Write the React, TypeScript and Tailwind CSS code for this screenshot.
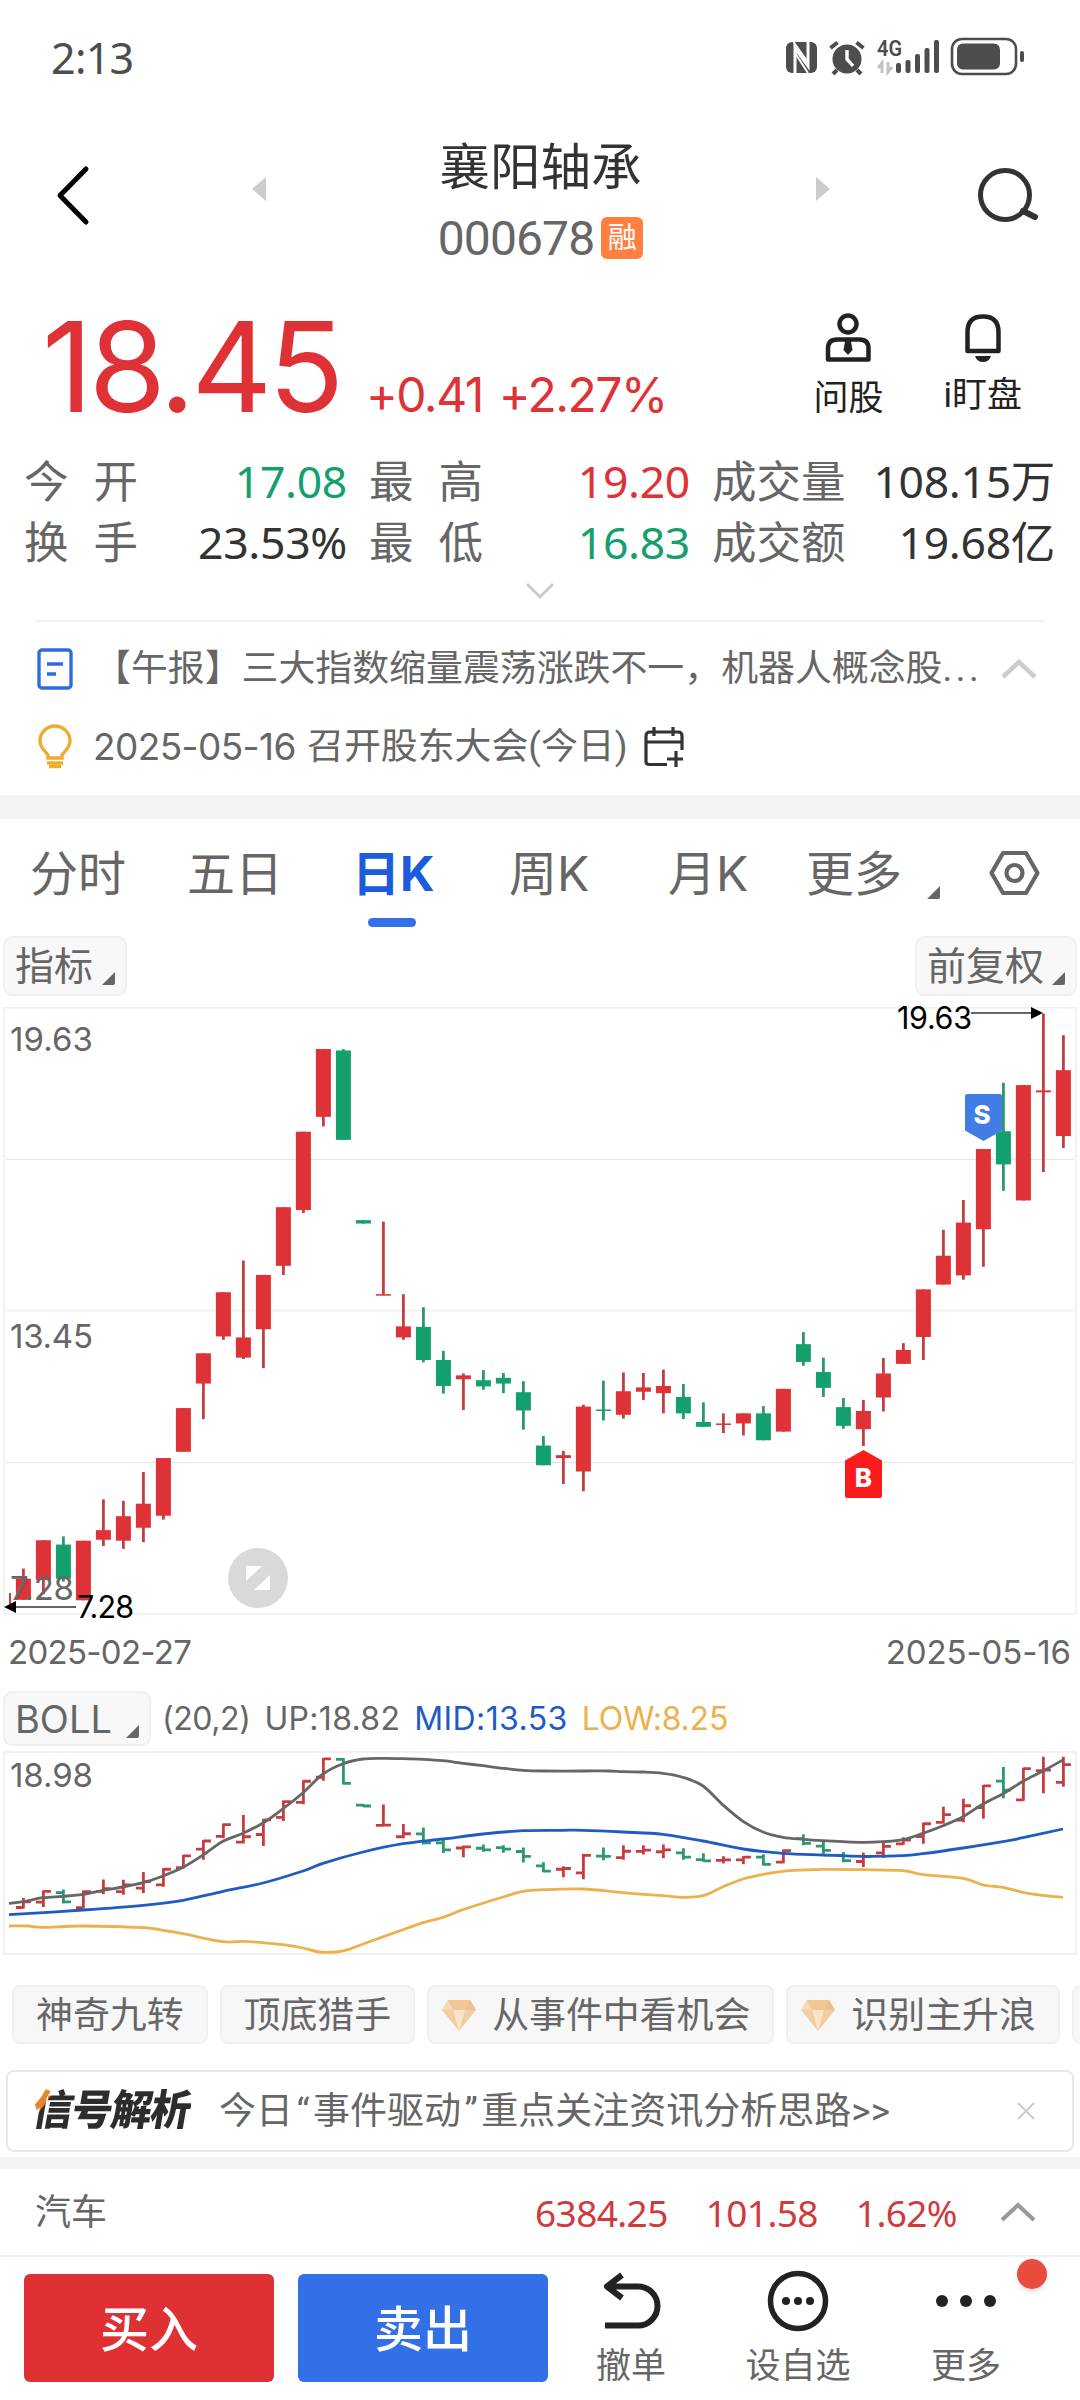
import type { ReactNode } from "react";
import { clsx } from "clsx";

type Candle = [open: number, close: number, high: number, low: number];

const RED = "#df3236";
const GREEN = "#14a06c";
const CHART_TOP = 1007;
const PITCH = 20;

const candles: Candle[] = [
    [7.43, 7.87, 8.08, 7.43],
    [7.84, 8.67, 8.67, 7.55],
    [8.58, 7.87, 8.75, 7.81],
    [7.42, 8.66, 8.66, 7.42],
    [8.68, 8.88, 9.52, 8.55],
    [8.66, 9.17, 9.49, 8.49],
    [8.93, 9.43, 10.09, 8.63],
    [9.18, 10.38, 10.38, 9.1],
    [10.51, 11.42, 11.42, 10.51],
    [11.93, 12.56, 12.56, 11.19],
    [12.91, 13.83, 13.83, 12.84],
    [12.47, 12.89, 14.49, 12.44],
    [13.06, 14.19, 14.19, 12.25],
    [14.38, 15.6, 15.6, 14.19],
    [15.54, 17.17, 17.17, 15.48],
    [17.48, 18.89, 18.89, 17.28],
    [18.86, 17.0, 18.89, 17.0],
    [15.33, 15.26, 15.33, 15.26],
    [13.77, 13.79, 15.3, 13.77],
    [12.89, 13.12, 13.79, 12.84],
    [13.11, 12.42, 13.52, 12.37],
    [12.42, 11.88, 12.61, 11.72],
    [12.02, 12.1, 12.14, 11.38],
    [12.0, 11.87, 12.21, 11.8],
    [12.05, 11.93, 12.15, 11.73],
    [11.75, 11.37, 11.98, 10.97],
    [10.64, 10.23, 10.84, 10.23],
    [10.38, 10.44, 10.53, 9.84],
    [10.1, 11.45, 11.49, 9.69],
    [11.39, 11.37, 11.99, 11.16],
    [11.28, 11.77, 12.16, 11.2],
    [11.76, 11.85, 12.15, 11.59],
    [11.73, 11.88, 12.22, 11.31],
    [11.65, 11.31, 11.92, 11.19],
    [11.13, 11.03, 11.54, 11.03],
    [11.07, 11.1, 11.31, 10.9],
    [11.1, 11.31, 11.31, 10.85],
    [11.31, 10.75, 11.46, 10.75],
    [10.93, 11.82, 11.82, 10.93],
    [12.75, 12.38, 13.0, 12.3],
    [12.17, 11.84, 12.47, 11.65],
    [11.44, 11.05, 11.63, 10.99],
    [10.98, 11.36, 11.59, 10.63],
    [11.64, 12.14, 12.46, 11.35],
    [12.34, 12.63, 12.77, 12.34],
    [12.9, 13.89, 13.89, 12.42],
    [13.99, 14.59, 15.13, 13.99],
    [14.18, 15.28, 15.75, 14.09],
    [15.14, 16.81, 16.81, 14.36],
    [17.18, 16.49, 18.19, 15.94],
    [15.74, 18.14, 18.14, 15.74],
    [17.99, 18.03, 19.63, 16.33],
    [17.08, 18.45, 19.18, 16.83],
];

const upBand = [9, 153.3, 23, 151.7, 43, 147.7, 63, 146.3, 83, 144.3, 103, 140.3, 123, 137, 143, 132.7, 163, 126, 183, 117.3, 203, 105, 223, 91.3, 243, 83.3, 263, 73, 283, 58.7, 303, 42.7, 323, 24, 343, 13.7, 363, 9, 383, 8.3, 403, 8.6, 423, 9.3, 443, 10.7, 463, 13.3, 483, 15.7, 503, 18.3, 523, 20.3, 543, 21, 583, 21, 609, 21, 623, 21.7, 643, 22, 663, 23.3, 683, 27.3, 703, 36, 723, 55, 743, 71.3, 763, 82, 783, 87.3, 803, 89.3, 823, 90.7, 843, 91.7, 863, 92.3, 883, 91.7, 903, 89.7, 923, 83.3, 943, 75.7, 963, 66.7, 983, 54, 1003, 43.7, 1023, 31.3, 1043, 21, 1063, 10];
const midBand = [9, 164.7, 83, 160, 143, 155.3, 183, 150.3, 223, 141.3, 263, 133, 303, 121, 323, 113.3, 363, 102, 403, 93.7, 443, 89, 483, 84, 523, 80.7, 563, 80.3, 583, 80.3, 623, 82, 663, 84.3, 703, 91, 743, 99, 783, 103.3, 823, 105, 863, 106.3, 903, 105.7, 923, 103.7, 963, 98, 1003, 91.7, 1023, 87.7, 1063, 79];
const lowBand = [9, 176, 28, 176, 43, 177.3, 83, 176, 143, 177.7, 163, 180.3, 183, 183.7, 223, 191.7, 243, 191.3, 263, 192.7, 283, 194.7, 303, 198, 319, 202, 336, 202, 348, 199.7, 363, 194, 403, 179.7, 423, 172.7, 443, 167.3, 463, 159.7, 503, 147, 523, 141.3, 543, 139.7, 583, 139, 623, 142.7, 663, 145.7, 683, 147.3, 703, 145.7, 723, 136.7, 743, 129, 763, 124.3, 783, 121.3, 803, 120, 823, 119.3, 863, 119.7, 903, 120.7, 923, 124.7, 963, 128.3, 983, 135, 1003, 137.3, 1023, 142.3, 1043, 145.3, 1063, 147.3];

// Catmull-Rom through a flat [x, y, x, y, ...] list
function smooth(flat: number[]) {
    const pts: [number, number][] = [];
    for (let i = 0; i < flat.length; i += 2) pts.push([flat[i], flat[i + 1]]);
    let d = `M${pts[0][0]} ${pts[0][1]}`;
    for (let i = 0; i < pts.length - 1; i++) {
        const p0 = pts[i - 1] ?? pts[i];
        const p1 = pts[i];
        const p2 = pts[i + 1];
        const p3 = pts[i + 2] ?? p2;
        d += `C${p1[0] + (p2[0] - p0[0]) / 6} ${p1[1] + (p2[1] - p0[1]) / 6} ${p2[0] - (p3[0] - p1[0]) / 6} ${p2[1] - (p3[1] - p1[1]) / 6} ${p2[0]} ${p2[1]}`;
    }
    return d;
}

const candleX = (i: number) => 23.4 + i * PITCH;
const priceY = (p: number) => 1013.5 - CHART_TOP + (19.63 - p) * 48.06;
const bollY = (p: number) => 7.8 + (18.98 - Math.min(p, 18.98)) * 12.96;

function StatusBar() {
    return (
        <div className="flex h-[110px] items-start justify-between pt-[30px] pl-[51px]">
            <span className="font-['Noto_Sans'] text-[43px] leading-[56px] tracking-[-0.700px] text-[#4d4d4d]">2:13</span>
            <svg width="260" height="56" viewBox="780 30 260 56" className="mr-[40px]" fill="#4d4d4d">
                <rect x="786" y="42" width="31" height="31" rx="6" />
                <path d="M795 74V48l13 18V41" stroke="#fff" strokeWidth="3" fill="none" />
                <path d="M793.500 42l15 21M795 53l13 20" stroke="#fff" strokeWidth="2" />
                <circle cx="847" cy="59" r="14.5" />
                <path d="M830.500 48l7-5.500M863.500 48l-7-5.500M837 70l-4 4M857 70l4 4" stroke="#4d4d4d" strokeWidth="4" />
                <path d="M847 50v9l6 7" stroke="#fff" strokeWidth="3.4" fill="none" />
                <text x="877" y="56" fontSize="22" fontWeight="600" fontFamily="Roboto" textLength="25" lengthAdjust="spacingAndGlyphs">4G</text>
                <path d="M882 73V63l-4 5M888 62v10l4-5" stroke="#c4c4c4" strokeWidth="3" fill="none" />
                <rect x="896" y="63" width="5" height="10" rx="2" />
                <rect x="905.500" y="60" width="5" height="13" rx="2" />
                <rect x="915" y="54" width="5" height="19" rx="2" />
                <rect x="924.500" y="48" width="5" height="25" rx="2" />
                <rect x="934" y="40" width="5" height="33" rx="2" />
                <rect x="952" y="39" width="64" height="35" rx="10" fill="none" stroke="#4d4d4d" strokeWidth="2.600" />
                <rect x="957" y="43.500" width="43" height="26" rx="6" />
                <rect x="1020" y="51" width="4" height="11" rx="2" />
            </svg>
        </div>
    );
}

function Header() {
    return (
        <div className="flex h-[180px] justify-between">
            <svg width="60" height="180" viewBox="40 110 60 180" className="ml-[40px]" fill="none" stroke="#000" strokeWidth="5" strokeLinecap="round" strokeLinejoin="round">
                <path d="M86 169 60 195.500 86 222" />
            </svg>
            <div className="ml-[11px] flex w-[580px] justify-between">
                <svg width="16" height="180" viewBox="0 0 16 180" fill="#ccc">
                    <path d="M1 79 15 67v24z" />
                </svg>
                <div className="flex flex-col items-center">
                    <h1 className="mt-[28px] text-[50.500px] leading-[60px] text-[#333]">襄阳轴承</h1>
                    <div className="mt-[18px] flex h-[44px] items-center gap-[7px]">
                        <span className="pt-[2px] font-['Roboto'] text-[48px] leading-[44px] tracking-[-0.900px] text-[#666]">000678</span>
                        <span className="flex h-[42px] w-[42px] items-center justify-center rounded-md bg-[#ff8040] text-[29px] leading-none text-white">融</span>
                    </div>
                </div>
                <svg width="16" height="180" viewBox="0 0 16 180" fill="#ccc">
                    <path d="M15 79 1 67v24z" />
                </svg>
            </div>
            <svg width="80" height="180" viewBox="970 110 80 180" className="mr-[30px]" fill="none" stroke="#333" strokeWidth="5">
                <circle cx="1005" cy="195" r="24.500" />
                <path d="M1023 211 1035 217" strokeWidth="6" strokeLinecap="round" />
            </svg>
        </div>
    );
}

function Quote() {
    return (
        <div className="flex h-[150px] items-start pl-[42px] text-[#df3236]">
            <span className="w-[324px] font-['Inter'] text-[125px] leading-[154px] tracking-[-4px]">18.45</span>
            <span className="mt-[75px] font-['Inter'] text-[48px] leading-[60px] tracking-[-1.500px] whitespace-nowrap">
                +0.41 <span className="ml-[4px]">+2.27%</span>
            </span>
            <div className="mt-[22px] ml-auto flex gap-[60px] pr-[58px] text-[35px] leading-[44px] text-[#222]">
                <div className="flex flex-col items-center gap-[13px]">
                    <svg width="50" height="52" viewBox="823 312 50 52" fill="none" stroke="#222" strokeWidth="4.500">
                        <circle cx="848" cy="324" r="8.500" />
                        <path d="M828 359.500v-11q0-9 9-9h22.500q9 0 9 9v11z" strokeLinejoin="round" />
                        <path d="M845.500 339h5l2 11-4.500 5-4.500-5z" fill="#222" stroke="none" />
                    </svg>
                    <span>问股</span>
                </div>
                <div className="flex flex-col items-center gap-[10px]">
                    <svg width="50" height="52" viewBox="957 312 50 52" fill="none" stroke="#222" strokeWidth="4.500">
                        <path d="M966.500 351v-19q0-15.500 15.500-15.500t15.500 15.500v19z" strokeLinejoin="round" />
                        <path d="M974 356h16q-2 6-8 6t-8-6z" fill="#222" stroke="none" />
                    </svg>
                    <span>i盯盘</span>
                </div>
            </div>
        </div>
    );
}

function Stat({ label, value, color, spread }: { label: string; value: string; color: string; spread?: boolean }) {
    return (
        <div className="flex justify-between">
            <span className={clsx("text-[#666]", spread && "tracking-[25px]")}>{label}</span>
            <span className={clsx("tracking-[-0.300px]", color)}>{value}</span>
        </div>
    );
}

function Stats() {
    return (
        <div className="flex h-[180px] flex-col items-center">
            <div className="grid w-full grid-cols-[323px_321px_343px] gap-x-[22px] pt-[10px] pl-[24px] font-['Noto_Sans','Noto_Sans_CJK_SC'] text-[44.500px] leading-[61px]">
                <Stat label="今开" value="17.08" color="text-[#14a06c]" spread />
                <Stat label="最高" value="19.20" color="text-[#df3236]" spread />
                <Stat label="成交量" value="108.15万" color="text-[#333]" />
                <Stat label="换手" value="23.53%" color="text-[#333]" spread />
                <Stat label="最低" value="16.83" color="text-[#14a06c]" spread />
                <Stat label="成交额" value="19.68亿" color="text-[#333]" />
            </div>
            <svg width="32" height="20" viewBox="0 0 32 20" className="mt-[9px]" fill="none" stroke="#ccc" strokeWidth="3">
                <path d="M3 3 16 16 29 3" />
            </svg>
        </div>
    );
}

function News() {
    return (
        <div className="mx-[35px] flex h-[175px] flex-col border-t-2 border-[#f0f0f0] pt-[18px] text-[36.900px] leading-[58px] text-[#666]">
            <div className="flex items-center">
                <svg width="38" height="44" viewBox="36 648 38 44" className="ml-px" fill="none" stroke="#2f6bdf" strokeWidth="3.400">
                    <rect x="39" y="651" width="32" height="38" rx="3" />
                    <path d="M47 665h16M47 675h9" />
                </svg>
                <span className="ml-[20px] whitespace-nowrap">
                    【午报】三大指数缩量震荡涨跌不一，机器人概念股<span className="tracking-[3.500px]">...</span>
                </span>
                <svg width="36" height="22" viewBox="0 0 36 22" className="mr-[8px] ml-auto" fill="none" stroke="#ccc" strokeWidth="4.500">
                    <path d="M2 19 18 4 34 19" />
                </svg>
            </div>
            <div className="mt-[20px] flex items-center">
                <svg width="38" height="46" viewBox="36 722 38 46" className="ml-px" fill="none" stroke="#f0ab2c" strokeWidth="3.400">
                    <path d="M48 756v-3c-2-3-8-7-8-14a15 15 0 0 1 30 0c0 7-6 11-8 14v3z" />
                    <path d="M47 761h16" />
                    <path d="M49 764.500h12" />
                </svg>
                <span className="ml-[19px] flex w-[214px] font-['Inter'] text-[37px] tracking-[-0.600px]">2025-05-16</span>
                <span>召开股东大会(今日)</span>
                <svg width="44" height="46" viewBox="642 722 44 46" className="ml-[14px]" fill="none" stroke="#333" strokeWidth="3.200">
                    <path d="M667 762.500h-18q-3 0-3-3V734q0-4 4-4h28q4 0 4 4v14M646 740h36M654 725v9M673 725v9M667 757h16M676 749v16" />
                </svg>
            </div>
        </div>
    );
}

function Corner({ className }: { className?: string }) {
    return (
        <svg width="13" height="13" viewBox="0 0 13 13" className={className} fill="#666">
            <path d="M13 0v11q0 2-2 2H0z" />
        </svg>
    );
}

function Tabs() {
    return (
        <div className="grid h-[116px] grid-cols-[157px_165px_157px_159px_138px_182px_52px] pt-[27px] pl-[30px] font-['Inter','Noto_Sans_CJK_SC'] text-[48px] leading-[56px] text-[#666]">
            <span>分时</span>
            <span>五日</span>
            <div className="flex flex-col items-start font-bold text-[#1b5bdc]">
                日K
                <span className="mt-[16px] ml-[16px] h-[9px] w-[48px] rounded-full bg-[#3470e8]" />
            </div>
            <span>周K</span>
            <span>月K</span>
            <div className="flex items-end gap-[25px] self-start">
                更多
                <Corner className="mb-[3px]" />
            </div>
            <svg width="52" height="50" viewBox="988 848 52 50" className="mt-[2px]" fill="none" stroke="#666" strokeWidth="4.200" strokeLinejoin="round">
                <path d="M1003 853h23l11.500 20-11.500 20h-23l-11.500-20z" />
                <circle cx="1014.500" cy="873" r="8" />
            </svg>
        </div>
    );
}

function Pill({ children, className }: { children: ReactNode; className: string }) {
    return (
        <button className={clsx("flex items-center rounded-[9px] border-2 border-[#f0f0f0] bg-[#f8f8f8] text-[#666]", className)}>
            <span className="pt-[2px]">{children}</span>
            <Corner className="mt-[25px]" />
        </button>
    );
}

function KChart() {
    return (
        <svg width="1080" height="620" viewBox="0 0 1080 620" className="block overflow-visible" fontFamily="Inter">
            <rect x="4" y="0.800" width="1072" height="606" fill="none" stroke="#f0f0f0" strokeWidth="1.600" />
            <path d="M6 152.500h1068M6 455.500h1068" stroke="#e6e6e6" />
            <path d="M6 303.500h1068" stroke="#f1f1f1" strokeWidth="2" />
            <path d={`M10 ${priceY(7.57)}V${priceY(7.28)}`} stroke="#c04044" strokeWidth="2" />
            {candles.map(([open, close, high, low], i) => {
                const up = close >= open;
                const top = priceY(Math.max(open, close));
                const height = Math.max(priceY(Math.min(open, close)) - top, 1.5);
                return (
                    <g key={i}>
                        <rect x={candleX(i) - 1.4} y={priceY(high)} width="2.800" height={priceY(low) - priceY(high)} fill={up ? "#c04044" : "#2b9871"} />
                        <rect x={candleX(i) - 7.5} y={top} width="15" height={height} fill={up ? RED : GREEN} />
                    </g>
                );
            })}
            <g fontSize="33" fill="#666">
                <text x="10" y="44" textLength="83">19.63</text>
                <text x="10" y="341" textLength="83">13.45</text>
                <text x="10" y="593" textLength="64">7.28</text>
            </g>
            <g fontSize="30.500" fill="#000">
                <text x="897" y="21.500" textLength="75">19.63</text>
                <text x="77" y="611" textLength="57">7.28</text>
            </g>
            <path d="M971 6h62M15 600h61" stroke="#666" strokeWidth="1.800" />
            <path d="M1043 6l-12-6v12zM4 600l12-6v12z" fill="#000" />
            <path d="M965 89q0-2 2-2h33q2 0 2 2v34.500l-18.500 10.500-18.500-10.500z" fill="#417de4" />
            <path d="M863.500 443l18.500 10.500v35.500q0 2-2 2h-33q-2 0-2-2v-35.500z" fill="#fa1c1c" />
            <g fontSize="26" fontWeight="800" fill="#fff" textAnchor="middle">
                <text x="982" y="117">S</text>
                <text x="863.500" y="480">B</text>
            </g>
            <circle cx="258" cy="571" r="30" fill="#d9d9d9" />
            <path d="M247 559h15l-16 15v-14q0-1 1-1zM269 583h-15l16-15v14q0 1-1 1z" fill="#fff" />
        </svg>
    );
}

function BollChart() {
    return (
        <svg width="1080" height="206" viewBox="0 0 1080 206" className="block" fontFamily="Inter" fill="none">
            <rect x="4" y="2" width="1072" height="202" stroke="#f0f0f0" strokeWidth="1.800" />
            <text x="10" y="37" fontSize="33" fill="#666" textLength="83">18.98</text>
            {candles.map(([open, close, high, low], i) => {
                const x = candleX(i);
                return (
                    <path
                        key={i}
                        d={`M${x - 7.5} ${bollY(open)}H${x}M${x} ${bollY(close)}H${x + 7.5}M${x} ${bollY(high) - 1}V${bollY(low) + 1}`}
                        stroke={close >= open ? "#c83c40" : "#2b9871"}
                        strokeWidth="2.800"
                    />
                );
            })}
            <g strokeWidth="2.800">
                <path d={smooth(upBand)} stroke="#666" />
                <path d={smooth(midBand)} stroke="#1f5bc4" />
                <path d={smooth(lowBand)} stroke="#ecb04c" />
            </g>
        </svg>
    );
}

function Diamond() {
    return (
        <svg width="34" height="31" viewBox="0 0 34 31" className="mr-[16px]">
            <path d="M6 0h22l6 10-17 21L0 10z" fill="#f3cda2" />
            <path d="M6 0 11 10H0z" fill="#f7d9b8" />
            <path d="M28 0 23 10H34z" fill="#edbf8e" />
            <path d="M11 10h12l-6 21z" fill="#fae3c9" />
            <path d="M6 0h22l-5 10H11z" fill="#f2c798" />
        </svg>
    );
}

function Chip({ children, vip }: { children?: ReactNode; vip?: boolean }) {
    return (
        <div className={clsx("flex h-[59px] shrink-0 items-center rounded-lg border-2 border-[#f0f0f0] bg-[#f7f7f7] pt-[2px] pr-[22px]", vip ? "pl-[13px]" : "pl-[22px]")}>
            {vip && <Diamond />}
            {children}
        </div>
    );
}

function Banner() {
    return (
        <div className="mx-[6px] mt-[26px] flex h-[82px] items-center rounded-lg border-2 border-[#e8e8e8] pl-[25px] text-[37px] text-[#666]">
            <span className="w-[166px] pt-[4px]">
                <span className="inline-block origin-left scale-x-[0.970] -skew-x-10 bg-[linear-gradient(120deg,#e8842c_18px,#2d2d2d_18px)] bg-clip-text text-[42px] leading-[48px] font-black tracking-[-1.500px] whitespace-nowrap text-transparent">信号解析</span>
            </span>
            <span className="ml-[20px] pt-[2px] whitespace-nowrap">
                今日<span className="px-[3.500px]">“</span>事件驱动<span className="px-[3.500px]">”</span>重点关注资讯分析思路&gt;&gt;
            </span>
            <svg width="18" height="18" viewBox="0 0 18 18" className="mr-[37px] ml-auto" stroke="#ccc" strokeWidth="2">
                <path d="M1 1 17 17M17 1 1 17" />
            </svg>
        </div>
    );
}

function IndexRow() {
    return (
        <div className="flex h-[88px] items-center border-b-2 border-[#f0f0f0] pr-[43px] pl-[35px] text-[36px] text-[#666]">
            <span className="pt-[2px]">汽车</span>
            <div className="ml-auto flex gap-[38px] pt-px font-['Noto_Sans'] text-[37px] tracking-[-0.600px] text-[#cf3a3e]">
                <span>6384.25</span>
                <span>101.58</span>
                <span>1.62%</span>
            </div>
            <svg width="38" height="22" viewBox="0 0 38 22" className="ml-[42px]" fill="none" stroke="#999" strokeWidth="4">
                <path d="M3 19 19 4 35 19" />
            </svg>
        </div>
    );
}

function Action({ label, className, children }: { label: string; className: string; children: ReactNode }) {
    return (
        <div className={clsx("flex flex-col items-center gap-[8px] text-[35px] leading-[52px] text-[#666]", className)}>
            <svg width="64" height="64" viewBox="0 0 64 64" fill="none" stroke="#222" strokeWidth="6">
                {children}
            </svg>
            <span>{label}</span>
        </div>
    );
}

function BottomBar() {
    return (
        <div className="relative flex h-[143px] pt-[12px] pl-[24px]">
            <button className="mt-[5px] h-[108px] w-[250px] rounded-md bg-[#df3034] pt-[5px] text-[49px] font-medium text-white">买入</button>
            <button className="mt-[5px] ml-[24px] h-[108px] w-[250px] rounded-md bg-[#336fe6] pt-[5px] text-[49px] font-medium text-white">卖出</button>
            <Action label="撤单" className="ml-[31px] w-[104px]">
                <path d="M23 6 8 17.500 23 29M8 17.500h31a19.500 19.500 0 0 1 0 39H6" strokeLinejoin="round" />
            </Action>
            <Action label="设自选" className="ml-[61px] w-[108px]">
                <circle cx="32" cy="32" r="27.500" strokeWidth="5.500" />
                <g fill="#222" stroke="none">
                    <circle cx="20" cy="32" r="4" />
                    <circle cx="32" cy="32" r="4" />
                    <circle cx="44" cy="32" r="4" />
                </g>
            </Action>
            <Action label="更多" className="ml-[62px] w-[104px]">
                <g fill="#222" stroke="none">
                    <circle cx="8" cy="32" r="6" />
                    <circle cx="32" cy="32" r="6" />
                    <circle cx="56" cy="32" r="6" />
                </g>
            </Action>
            <span className="absolute top-[2px] left-[1017px] h-[30px] w-[30px] rounded-full bg-[#e74c3c] shadow-md" />
        </div>
    );
}

export default function App() {
    return (
        <div className="h-[2400px] w-[1080px] overflow-hidden bg-white font-['Roboto','Noto_Sans_CJK_SC',sans-serif]">
            <StatusBar />
            <Header />
            <Quote />
            <Stats />
            <News />
            <div className="h-[24px] bg-[#f4f4f4]" />
            <Tabs />
            <div className="flex h-[72px] justify-between px-[3px] pt-px text-[39px]">
                <Pill className="h-[60px] gap-[9px] pr-[10px] pl-[10px]">指标</Pill>
                <Pill className="h-[60px] gap-[8px] pr-[10px] pl-[10px]">前复权</Pill>
            </div>
            <KChart />
            <div className="flex h-[64px] justify-between pr-[9px] pl-[8px] font-['Inter'] text-[33px] leading-[50px] text-[#666]">
                <span className="tracking-[-0.700px]">2025-02-27</span>
                <span className="tracking-[-0.100px]">2025-05-16</span>
            </div>
            <div className="flex h-[59px] items-start pl-[3px] font-['Inter'] text-[32px] text-[#666]">
                <Pill className="h-[55px] gap-[14px] pr-[10px] pl-[10px] text-[38px]">BOLL</Pill>
                <div className="ml-[11px] flex gap-[14px] leading-[55px]">
                    <span className="tracking-[-0.400px]">(20,2)</span>
                    <span className="tracking-[0.300px]">UP:18.82</span>
                    <span className="tracking-[0.400px] text-[#1f5bc4]">MID:13.53</span>
                    <span className="tracking-[-0.200px] text-[#ecb04c]">LOW:8.25</span>
                </div>
            </div>
            <BollChart />
            <div className="mt-[29px] flex gap-[12px] overflow-hidden pl-[12px] text-[36.900px] text-[#666]">
                <Chip>神奇九转</Chip>
                <Chip>顶底猎手</Chip>
                <Chip vip>从事件中看机会</Chip>
                <Chip vip>识别主升浪</Chip>
                <Chip />
            </div>
            <Banner />
            <div className="mt-[5px] h-[12px] bg-[#f4f4f4]" />
            <IndexRow />
            <BottomBar />
        </div>
    );
}
